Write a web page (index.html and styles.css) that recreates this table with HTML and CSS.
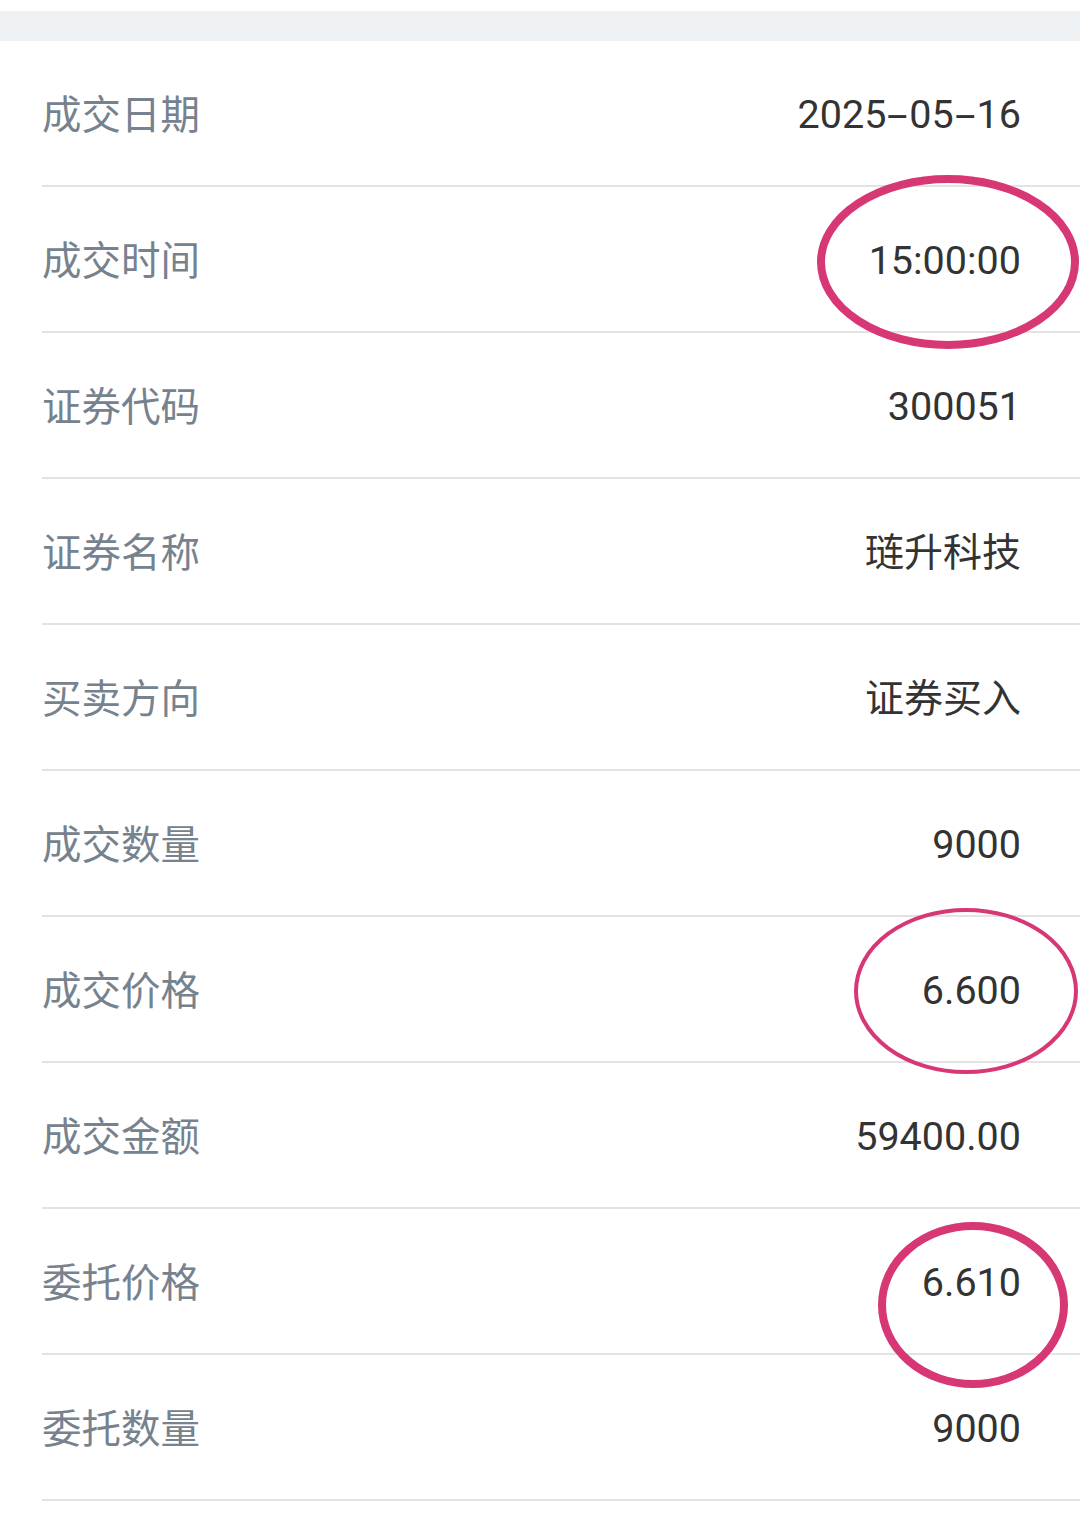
FILE: index.html
```html
<!DOCTYPE html>
<html lang="zh-CN">
<head>
<meta charset="utf-8">
<link rel="stylesheet" href="styles.css">
</head>
<body>
<div class="page">
  <div class="band"></div>
  <div class="list">
    <div class="row"><span class="label">成交日期</span><span class="value">2025<span class="dash">-</span>05<span class="dash">-</span>16</span></div>
    <div class="row"><span class="label">成交时间</span><span class="value">15:00:00</span></div>
    <div class="row"><span class="label">证券代码</span><span class="value">300051</span></div>
    <div class="row"><span class="label">证券名称</span><span class="value cjk">琏升科技</span></div>
    <div class="row"><span class="label">买卖方向</span><span class="value cjk">证券买入</span></div>
    <div class="row"><span class="label">成交数量</span><span class="value">9000</span></div>
    <div class="row"><span class="label">成交价格</span><span class="value">6.600</span></div>
    <div class="row"><span class="label">成交金额</span><span class="value">59400.00</span></div>
    <div class="row"><span class="label">委托价格</span><span class="value">6.610</span></div>
    <div class="row"><span class="label">委托数量</span><span class="value">9000</span></div>
  </div>
  <svg class="marks" width="1080" height="1530" viewBox="0 0 1080 1530">
    <ellipse cx="948" cy="262" rx="127" ry="83" fill="none" stroke="#d73774" stroke-width="8"/>
    <ellipse cx="966" cy="991" rx="110" ry="81" fill="none" stroke="#d73774" stroke-width="4"/>
    <ellipse cx="973" cy="1305" rx="91" ry="79" fill="none" stroke="#d73774" stroke-width="8"/>
  </svg>
</div>
</body>
</html>
```

FILE: styles.css
```css
html, body {
  margin: 0;
  padding: 0;
  background: #ffffff;
}
.page {
  position: relative;
  width: 1080px;
  height: 1530px;
  overflow: hidden;
  background: #ffffff;
  font-family: Roboto, "Noto Sans CJK SC", sans-serif;
}
.band {
  margin-top: 11px;
  height: 30px;
  background: #eef1f4;
}
.list {
  margin-left: 42px;
}
.row {
  display: flex;
  justify-content: space-between;
  align-items: center;
  height: 144px;
  border-bottom: 2px solid #e3e3e3;
  padding-right: 59px;
}
.label {
  font-family: "Noto Sans CJK SC", sans-serif;
  font-size: 39.5px;
  color: #76828e;
  position: relative;
  top: -2px;
}
.value {
  font-size: 39.5px;
  color: #333333;
  position: relative;
  top: 1px;
}
.value.cjk {
  font-family: "Noto Sans CJK SC", sans-serif;
  font-size: 39px;
  top: -2px;
}
.dash {
  display: inline-block;
  margin: 0 6px;
  transform: scaleX(1.9);
}
.marks {
  position: absolute;
  left: 0;
  top: 0;
  pointer-events: none;
}
```
